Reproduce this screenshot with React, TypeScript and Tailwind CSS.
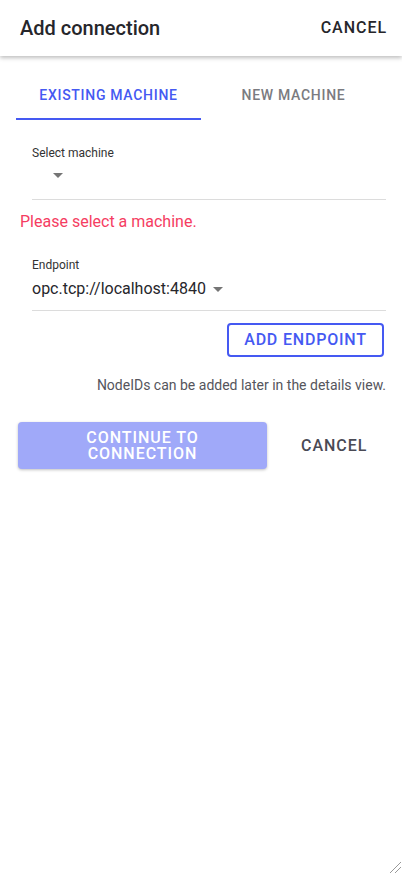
import React from "react";

const font = { fontFamily: "Roboto, 'Noto Sans', sans-serif" };

const Caret = () => (
  <svg width="10" height="5" viewBox="0 0 10 5" className="fill-[#757575]">
    <path d="M0 0h10L5 5z" />
  </svg>
);

export default function App() {
  return (
    <div className="relative h-[874px] w-[402px] overflow-hidden bg-white" style={font}>
      {/* Header */}
      <header className="relative z-10 flex h-[56px] items-center justify-between bg-white pl-5 pr-[15px] shadow-[0_2px_4px_rgba(0,0,0,0.25)]">
        <h1 className="text-[20px] font-medium text-[#26262b]">Add connection</h1>
        <button className="text-[16px] font-medium tracking-[0.06em] text-[#26262b]">CANCEL</button>
      </header>

      {/* Tabs */}
      <div className="mx-4 mt-[16px] flex">
        <button className="flex h-[48px] flex-1 items-center justify-center border-b-2 border-[#4559f2] text-[14px] font-medium tracking-[0.05em] text-[#4559f2]">
          EXISTING MACHINE
        </button>
        <button className="flex h-[48px] flex-1 items-center justify-center border-b-2 border-transparent text-[14px] font-medium tracking-[0.05em] text-[#7b7b80]">
          NEW MACHINE
        </button>
      </div>

      {/* Select machine */}
      <div className="ml-8 mr-4 mt-[26px] border-b border-[#dcdcdc]">
        <div className="text-[12px] leading-[14px] text-[#333]">Select machine</div>
        <div className="flex h-[30px] items-center pl-[21px]">
          <Caret />
        </div>
        <div className="h-[9px]" />
      </div>
      <p className="ml-5 mt-[12px] text-[16px] leading-[20px] text-[#f53d62]">Please select a machine.</p>

      {/* Endpoint */}
      <div className="ml-8 mr-4 mt-[26px] border-b border-[#dcdcdc]">
        <div className="text-[12px] leading-[14px] text-[#333]">Endpoint</div>
        <div className="mt-[2px] flex h-[30px] items-center gap-[7px] text-[16px] text-[#26262b]">
          opc.tcp://localhost:4840
          <Caret />
        </div>
        <div className="h-[6px]" />
      </div>

      <div className="mr-[18px] mt-[12px] flex justify-end">
        <button className="h-[34px] w-[157px] rounded-[4px] border-2 border-[#4559f2] text-[16px] font-medium tracking-[0.05em] text-[#4559f2]">
          ADD ENDPOINT
        </button>
      </div>

      <p className="mr-4 mt-[18px] text-right text-[14px] text-[#55555c]">
        NodeIDs can be added later in the details view.
      </p>

      {/* Actions */}
      <div className="ml-[18px] mt-[26px] flex items-center">
        <button className="flex h-[47px] w-[249px] flex-col items-center justify-center rounded-[4px] bg-[#a0a9f9] text-[16px] font-medium leading-[16px] tracking-[0.06em] text-white shadow-[0_1px_3px_rgba(0,0,0,0.25)]">
          <span>CONTINUE TO</span>
          <span>CONNECTION</span>
        </button>
        <button className="ml-[34px] text-[16px] font-medium tracking-[0.06em] text-[#4a4a55]">CANCEL</button>
      </div>

      {/* Resize handle */}
      <svg className="absolute bottom-0 right-0" width="14" height="14" viewBox="0 0 14 14">
        <path d="M13 2L2 13M13 7L7 13" stroke="#999" strokeWidth="1" />
      </svg>
    </div>
  );
}
